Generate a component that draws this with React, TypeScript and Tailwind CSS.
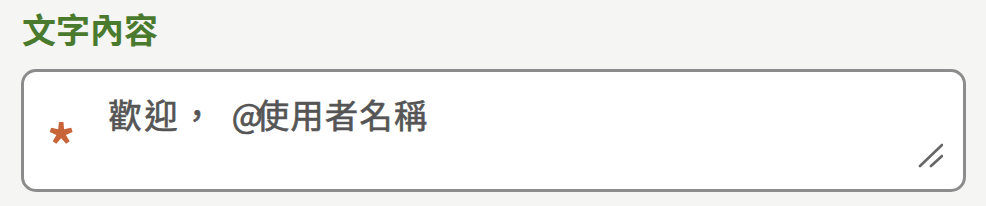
export default function App() {
  return (
    <div
      className="w-[986px] h-[206px] bg-[#f5f6f3] px-[21px] pt-[6px]"
      style={{ fontFamily: '"Noto Sans CJK TC", "Noto Sans", sans-serif' }}
    >
      {/* 標題 */}
      <h2 className="text-[34px] leading-[46px] font-bold text-[#4a7a2e] pl-[1px]">文字內容</h2>

      {/* 文字框 */}
      <div className="relative mt-[17px] h-[123px] w-[945px] rounded-[15px] border-[3px] border-[#8c8c8c] bg-white flex">
        <span className="pl-[23px] pt-[43px] text-[56px] leading-none font-bold text-[#c8643a]">*</span>
        <p className="pl-[33px] pt-[20px] text-[33px] leading-[44px] font-normal tracking-[3px] text-[#555555] [-webkit-text-stroke:0.7px_#555555] whitespace-pre">
          歡迎，<span className="tracking-[8px]"> </span>
          <span className="tracking-[-7px]">@</span>
          <span className="tracking-[1.5px]">使用者名稱</span>
        </p>
        <svg
          className="absolute right-[20px] bottom-[20px]"
          width="26"
          height="26"
          viewBox="0 0 26 26"
          fill="none"
          stroke="#666"
          strokeWidth="2.6"
          strokeLinecap="round"
        >
          <line x1="3" y1="23" x2="25" y2="2" />
          <line x1="14" y1="23" x2="25" y2="13" />
        </svg>
      </div>
    </div>
  );
}
